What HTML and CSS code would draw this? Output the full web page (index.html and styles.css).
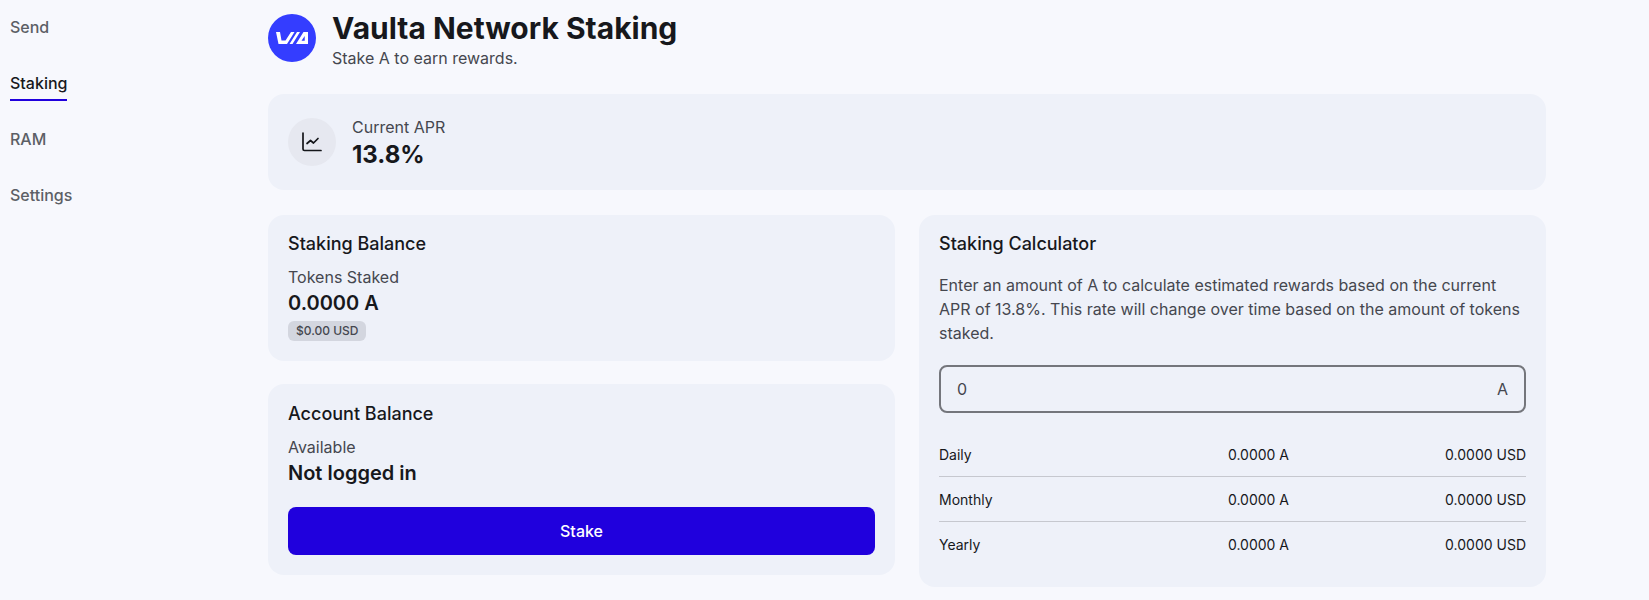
FILE: index.html
```html
<!DOCTYPE html>
<html lang="en">
<head>
<meta charset="utf-8">
<title>Vaulta Network Staking</title>
<link rel="stylesheet" href="styles.css">
</head>
<body>
<div class="page">
  <nav class="side">
    <a class="nav-item">Send</a>
    <a class="nav-item active">Staking</a>
    <a class="nav-item">RAM</a>
    <a class="nav-item">Settings</a>
  </nav>
  <main class="main">
    <header class="head">
      <svg class="logo" viewBox="0 0 48 48"><circle cx="24" cy="24" r="24" fill="#343dff"/><path fill="#fff" fill-rule="evenodd" d="M8 18h4l1.500 8.500h4l5.500-8.500h3.500l-7.500 12h-8.500zM21.500 30l7.500-12h3l-7.500 12zM28 30l7.500-12H40v12zM33.500 26.700h3.200V22z"/></svg>
      <div>
        <h1 class="title">Vaulta Network Staking</h1>
        <p class="sub">Stake A to earn rewards.</p>
      </div>
    </header>
    <section class="card apr">
      <span class="apr-icon">
        <svg width="24" height="24" viewBox="0 0 24 24" fill="none" stroke="#14161a" stroke-width="1.700" stroke-linecap="round" stroke-linejoin="round"><path d="M3 3v16a1.500 1.500 0 0 0 1.500 1.500H21"/><path d="M7 13.500l3.500-3 3 2.500 4.500-4.500"/></svg>
      </span>
      <div class="apr-text">
        <div class="label">Current APR</div>
        <div class="apr-value">13.8%</div>
      </div>
    </section>
    <div class="cols">
      <div class="col">
        <section class="card box">
          <h2 class="card-title">Staking Balance</h2>
          <div class="label">Tokens Staked</div>
          <div class="value">0.0000 A</div>
          <span class="badge">$0.00 USD</span>
        </section>
        <section class="card box">
          <h2 class="card-title">Account Balance</h2>
          <div class="label">Available</div>
          <div class="value">Not logged in</div>
          <button class="stake">Stake</button>
        </section>
      </div>
      <section class="card box">
        <h2 class="card-title calc-title">Staking Calculator</h2>
        <p class="desc">Enter an amount of A to calculate estimated rewards based on the current APR of 13.8%. This rate will change over time based on the amount of tokens staked.</p>
        <div class="field"><span>0</span><span>A</span></div>
        <div class="rows">
          <div class="row"><span>Daily</span><span>0.0000 A</span><span>0.0000 USD</span></div>
          <div class="row"><span>Monthly</span><span>0.0000 A</span><span>0.0000 USD</span></div>
          <div class="row"><span>Yearly</span><span>0.0000 A</span><span>0.0000 USD</span></div>
        </div>
      </section>
    </div>
  </main>
</div>
</body>
</html>
```
FILE: styles.css
```css
* { box-sizing: border-box; }
html, body { margin: 0; height: 100%; overflow: hidden; }
body { background: #f7f8fd; font-family: Inter, "Liberation Sans", sans-serif; color: #17181c; }
.page { display: flex; height: 600px; padding-right: 103px; }
.side { width: 268px; flex: none; padding: 3px 10px 0; display: flex; flex-direction: column; align-items: flex-start; }
.nav-item { font-size: 16px; font-weight: 500; line-height: 24px; color: #5c5f66; padding: 12px 0 4px; margin-bottom: 14px; border-bottom: 2px solid transparent; }
.nav-item.active { color: #17181c; border-bottom-color: #2000dd; }
.main { flex: 1; min-width: 0; }
.head { display: flex; align-items: flex-start; gap: 16px; height: 94px; padding-top: 10px; }
.logo { width: 48px; height: 48px; flex: none; margin-top: 4px; }
.title { margin: 0; font-size: 30px; line-height: 36px; font-weight: 700; }
.sub { margin: 0; font-size: 16px; line-height: 24px; color: #45474f; }
.card { background: #eef1f9; border-radius: 16px; }
.apr { display: flex; align-items: center; gap: 16px; height: 96px; padding: 2px 20px 0; margin-bottom: 25px; }
.apr-icon { width: 48px; height: 48px; margin-top: -2px; border-radius: 50%; background: #e6e8f0; display: flex; align-items: center; justify-content: center; }
.label { font-size: 16px; line-height: 22px; margin-bottom: 1px; color: #45474f; }
.apr-text .label { line-height: 24px; margin-bottom: 0; }
.apr-value { font-size: 24px; line-height: 32px; font-weight: 700; }
.cols { display: grid; grid-template-columns: 1fr 1fr; gap: 24px; align-items: start; }
.col { display: flex; flex-direction: column; gap: 23px; }
.box { padding: 17px 20px 20px; }
.box + .box { padding-top: 18px; }
.card-title { margin: 0 0 10px; font-size: 18px; line-height: 24px; font-weight: 500; }
.calc-title { margin-bottom: 17px; }
.value { font-size: 20px; line-height: 28px; font-weight: 600; }
.badge { display: block; width: fit-content; margin-top: 4px; padding: 0 8px; background: #d3d6df; border-radius: 6px; font-size: 12px; line-height: 20px; font-weight: 500; color: #45474f; }
.stake { display: block; width: 100%; height: 48px; margin-top: 20px; border: 0; border-radius: 8px; background: #2000dd; color: #fff; font: 500 16px Inter, "Liberation Sans", sans-serif; }
.desc { margin: 0 0 20px; font-size: 16px; line-height: 24px; color: #45474f; }
.field { display: flex; justify-content: space-between; align-items: center; height: 48px; padding: 0 16px; border: 2px solid #74767c; border-radius: 8px; font-size: 16px; color: #45474f; }
.rows { margin-top: 19px; }
.row { display: grid; grid-template-columns: 1fr auto 237px; align-items: center; height: 45px; font-size: 14px; border-bottom: 1px solid #c6c8cf; }
.row:last-child { border-bottom: 0; }
.row span:nth-child(3) { text-align: right; }
```
